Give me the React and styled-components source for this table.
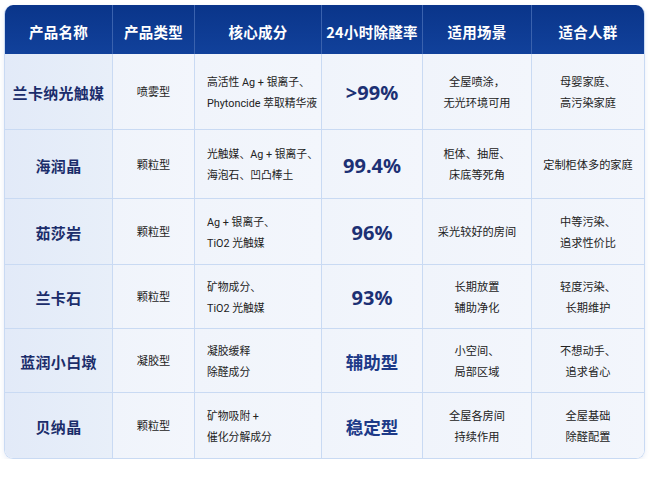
import React from "react";
import styled, { createGlobalStyle } from "styled-components";

const Global = createGlobalStyle`
  html, body { margin: 0; padding: 0; background: #ffffff; }
  body { font-family: "Noto Sans CJK SC", "Noto Sans", sans-serif; }
`;

const Page = styled.div`
  padding: 5px 0 0 4px;
`;

const Table = styled.div`
  width: 641px;
  box-sizing: border-box;
  display: grid;
  grid-template-columns: 108px 82px 127px 101px 109px 112px;
  grid-template-rows: 49px 76px 69px 66px 64px 64px 65px;
  border: 1px solid #c9daf3;
  border-top: none;
  border-radius: 9px;
  overflow: hidden;
  box-shadow: 0 2px 5px rgba(70, 110, 180, 0.12);
`;

const Head = styled.div`
  display: flex;
  align-items: center;
  justify-content: center;
  padding-top: 3px;
  box-sizing: border-box;
  background: linear-gradient(180deg, #0a358a 0%, #11419b 100%);
  color: #ffffff;
  font-weight: 700;
  font-size: 14.5px;
  letter-spacing: 0.3px;
  border-right: ${(p) => (p.$last ? "none" : "1px solid #3a62ae")};
`;

const Cell = styled.div`
  display: flex;
  flex-direction: column;
  align-items: ${(p) => (p.$left ? "flex-start" : "center")};
  justify-content: center;
  text-align: ${(p) => (p.$left ? "left" : "center")};
  padding: ${(p) => (p.$left ? "2px 0 0 12px" : "2px 0 0 0")};
  box-sizing: border-box;
  white-space: nowrap;
  background: ${(p) =>
    p.$first
      ? "linear-gradient(90deg, #e2eaf8 0%, #e8eff9 100%)"
      : "linear-gradient(90deg, #f0f4fb 0%, #f3f6fc 100%)"};
  border-right: ${(p) => (p.$lastCol ? "none" : "1px solid #c9daf3")};
  border-bottom: ${(p) => (p.$lastRow ? "none" : "1px solid #c9daf3")};
  color: #222222;
  font-family: Roboto, "Noto Sans CJK SC", sans-serif;
  font-size: ${(p) => (p.$left ? "10.8px" : "11.2px")};
  line-height: 21px;
`;

const Name = styled.span`
  font-family: "Noto Sans CJK SC", sans-serif;
  font-size: 15px;
  font-weight: 700;
  color: #1b2d6b;
  letter-spacing: 0.3px;
`;

const Rate = styled.span`
  font-family: "Noto Sans", "Noto Sans CJK SC", sans-serif;
  font-size: 20px;
  font-weight: 700;
  color: #1c3074;
`;

const RateWord = styled.span`
  font-family: "Noto Sans CJK SC", sans-serif;
  font-size: 17.5px;
  font-weight: 700;
  color: #1d3a88;
`;

const heads = ["产品名称", "产品类型", "核心成分", "24小时除醛率", "适用场景", "适合人群"];

const rows = [
  {
    name: "兰卡纳光触媒",
    type: "喷雾型",
    core: ["高活性 Ag + 银离子、", "Phytoncide 萃取精华液"],
    rate: ">99%",
    scene: ["全屋喷涂，", "无光环境可用"],
    people: ["母婴家庭、", "高污染家庭"],
  },
  {
    name: "海润晶",
    type: "颗粒型",
    core: ["光触媒、Ag + 银离子、", "海泡石、凹凸棒土"],
    rate: "99.4%",
    scene: ["柜体、抽屉、", "床底等死角"],
    people: ["定制柜体多的家庭"],
  },
  {
    name: "茹莎岩",
    type: "颗粒型",
    core: ["Ag + 银离子、", "TiO2 光触媒"],
    rate: "96%",
    scene: ["采光较好的房间"],
    people: ["中等污染、", "追求性价比"],
  },
  {
    name: "兰卡石",
    type: "颗粒型",
    core: ["矿物成分、", "TiO2 光触媒"],
    rate: "93%",
    scene: ["长期放置", "辅助净化"],
    people: ["轻度污染、", "长期维护"],
  },
  {
    name: "蓝润小白墩",
    type: "凝胶型",
    core: ["凝胶缓释", "除醛成分"],
    rate: "辅助型",
    word: true,
    scene: ["小空间、", "局部区域"],
    people: ["不想动手、", "追求省心"],
  },
  {
    name: "贝纳晶",
    type: "颗粒型",
    core: ["矿物吸附 +", "催化分解成分"],
    rate: "稳定型",
    word: true,
    scene: ["全屋各房间", "持续作用"],
    people: ["全屋基础", "除醛配置"],
  },
];

const Lines = ({ items }) =>
  items.map((t, i) => <span key={i}>{t}</span>);

export default function App() {
  return (
    <>
      <Global />
      <Page>
        <Table>
          {heads.map((h, i) => (
            <Head key={h} $last={i === heads.length - 1}>
              {h}
            </Head>
          ))}
          {rows.map((r, ri) => {
            const lastRow = ri === rows.length - 1;
            return (
              <React.Fragment key={r.name}>
                <Cell $first $lastRow={lastRow}>
                  <Name>{r.name}</Name>
                </Cell>
                <Cell $lastRow={lastRow}>{r.type}</Cell>
                <Cell $left $lastRow={lastRow}>
                  <Lines items={r.core} />
                </Cell>
                <Cell $lastRow={lastRow}>
                  {r.word ? <RateWord>{r.rate}</RateWord> : <Rate>{r.rate}</Rate>}
                </Cell>
                <Cell $lastRow={lastRow}>
                  <Lines items={r.scene} />
                </Cell>
                <Cell $lastRow={lastRow} $lastCol>
                  <Lines items={r.people} />
                </Cell>
              </React.Fragment>
            );
          })}
        </Table>
      </Page>
    </>
  );
}
